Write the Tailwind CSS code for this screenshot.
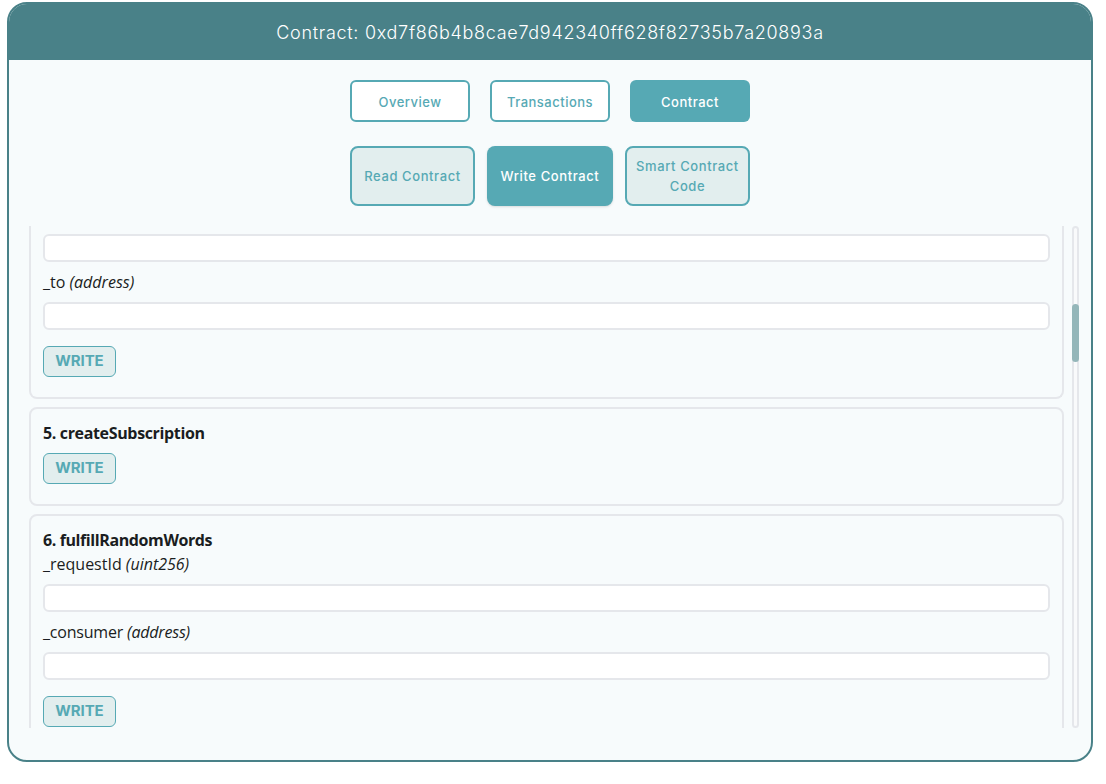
<!DOCTYPE html>
<html lang="en">
<head>
    <meta charset="UTF-8">
    <meta name="viewport" content="width=device-width, initial-scale=1.0">
    <title>Contract</title>
    <script src="https://cdn.jsdelivr.net/npm/@tailwindcss/browser@4"></script>
</head>
<body class="bg-white font-['Open_Sans',sans-serif] text-[#1a1d21]">
    <div class="pl-[7px] pt-[2px]">
        <div class="w-[1086px] h-[760px] rounded-[20px] border-2 border-[#498188] bg-[#f7fbfc] overflow-hidden">
            <!-- header -->
            <div class="h-[56px] pt-[2px] bg-[#498188] flex items-center justify-center text-white text-lg font-light tracking-[0.7px] font-['Inter',sans-serif]">
                Contract: 0xd7f86b4b8cae7d942340ff628f82735b7a20893a
            </div>

            <!-- main tabs -->
            <div class="flex justify-center gap-5 mt-5 font-['Inter',sans-serif] text-[13px] font-medium tracking-[0.5px]">
                <button class="w-[120px] h-[42px] pt-1 rounded-md border-2 border-[#56a9b4] bg-white text-[#56a9b4]">Overview</button>
                <button class="w-[120px] h-[42px] pt-1 rounded-md border-2 border-[#56a9b4] bg-white text-[#56a9b4]">Transactions</button>
                <button class="w-[120px] h-[42px] pt-1 rounded-md bg-[#56a9b4] text-white">Contract</button>
            </div>

            <!-- contract tabs -->
            <div class="flex justify-center gap-3 mt-6 font-['Inter',sans-serif] text-[13px] font-medium leading-5 tracking-[0.6px]">
                <button class="w-[125px] h-[60px] rounded-lg border-2 border-[#56a9b4] bg-[#e2eeee] text-[#56a9b4]">Read Contract</button>
                <button class="w-[126px] h-[60px] rounded-lg bg-[#56a9b4] text-white shadow">Write Contract</button>
                <button class="w-[125px] h-[60px] rounded-lg border-2 border-[#56a9b4] bg-[#e2eeee] text-[#56a9b4]">Smart Contract Code</button>
            </div>

            <!-- functions list + scrollbar -->
            <div class="flex h-[502px] mt-5 ml-5 mr-[12px] gap-2">
                <div class="flex-1 overflow-hidden flex flex-col gap-2">
                    <div class="shrink-0 border-2 border-t-0 border-[#e5e7eb] rounded-b-lg px-3 pt-2 pb-5">
                        <input class="block w-full h-7 rounded-md border-2 border-[#e5e7eb] bg-white">
                        <div class="mt-2 h-6 leading-6">_to <i>(address)</i></div>
                        <input class="block w-full h-7 mt-2 rounded-md border-2 border-[#e5e7eb] bg-white">
                        <button class="block mt-4 w-[73px] h-[31px] pb-px rounded-md border border-[#56a9b4] bg-[#e2eeee] text-[#56a9b4] font-bold text-[15px] tracking-[-0.1px] font-['Inter',sans-serif]">WRITE</button>
                    </div>
                    <div class="shrink-0 border-2 border-[#e5e7eb] rounded-lg px-3 pt-3 pb-5">
                        <div class="h-6 leading-6 font-bold tracking-[-0.35px]">5. createSubscription</div>
                        <button class="block mt-2 w-[73px] h-[31px] pb-px rounded-md border border-[#56a9b4] bg-[#e2eeee] text-[#56a9b4] font-bold text-[15px] tracking-[-0.1px] font-['Inter',sans-serif]">WRITE</button>
                    </div>
                    <div class="shrink-0 border-2 border-[#e5e7eb] rounded-lg px-3 pt-3 pb-5">
                        <div class="h-6 leading-6 font-bold tracking-[-0.4px]">6. fulfillRandomWords</div>
                        <div class="h-6 leading-6">_requestId <i>(uint256)</i></div>
                        <input class="block w-full h-7 mt-2 rounded-md border-2 border-[#e5e7eb] bg-white">
                        <div class="mt-2 h-6 leading-6 tracking-[-0.2px]">_consumer <i>(address)</i></div>
                        <input class="block w-full h-7 mt-2 rounded-md border-2 border-[#e5e7eb] bg-white">
                        <button class="block mt-4 w-[73px] h-[31px] pb-px rounded-md border border-[#56a9b4] bg-[#e2eeee] text-[#56a9b4] font-bold text-[15px] tracking-[-0.1px] font-['Inter',sans-serif]">WRITE</button>
                    </div>
                </div>
                <div class="relative w-[7px] rounded-full border-2 border-[#e5e7eb] bg-[#f9fafb]">
                    <div class="absolute top-[76px] -left-[2px] -right-[2px] h-[58px] rounded-full bg-[#94b6b9]"></div>
                </div>
            </div>
        </div>
    </div>
</body>
</html>
